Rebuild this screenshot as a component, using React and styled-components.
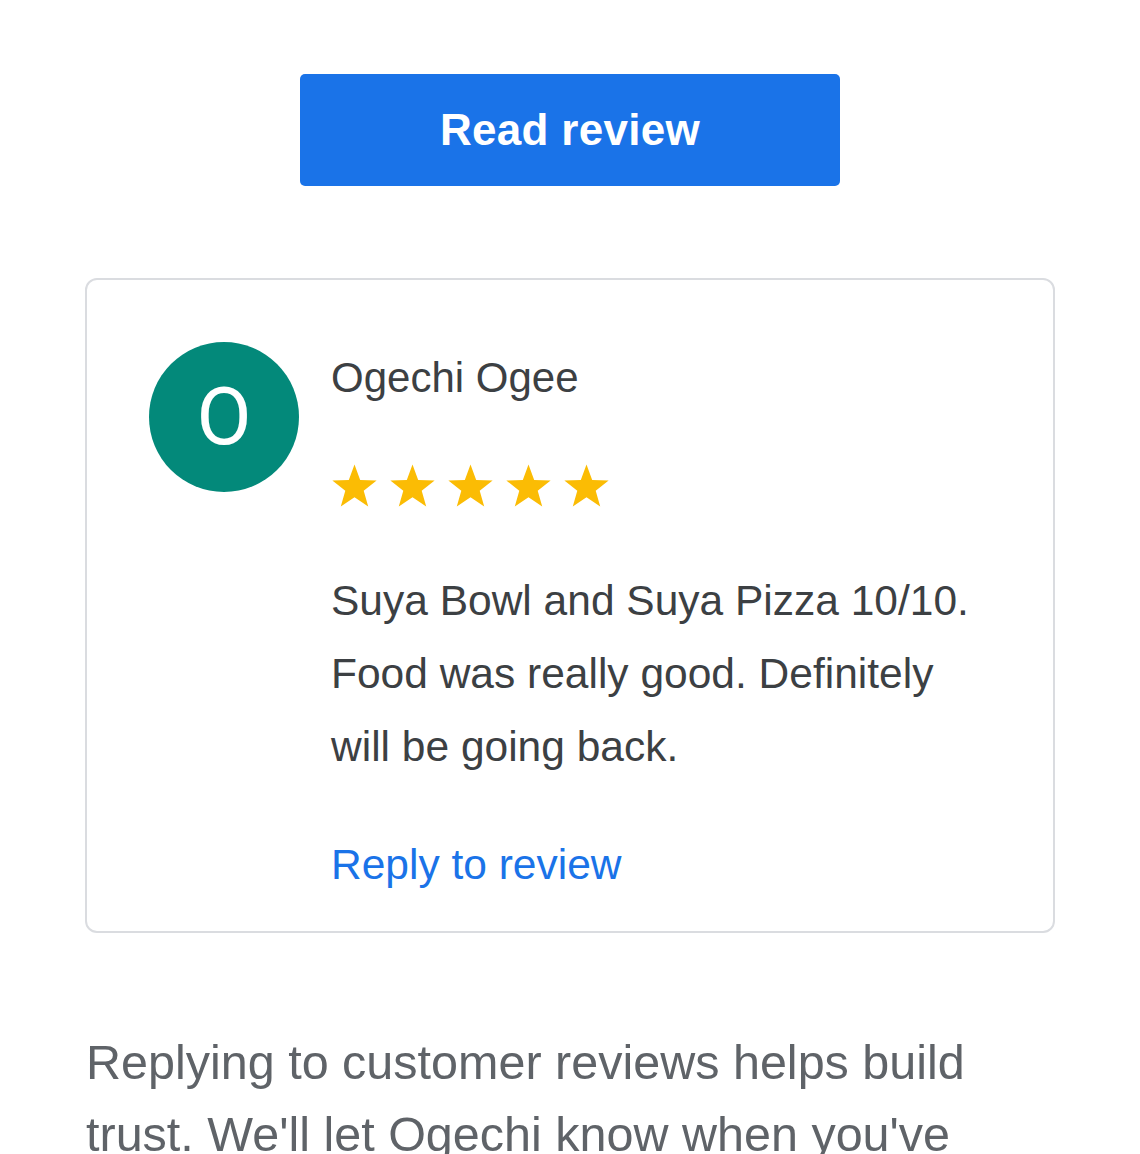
import React from 'react';
import styled, { createGlobalStyle } from 'styled-components';

const GlobalStyle = createGlobalStyle`
  body {
    margin: 0;
    background: #fff;
    font-family: "Liberation Sans", Arial, sans-serif;
  }
`;

const Page = styled.div`
  width: 970px;
  margin: 0 auto;
  padding-top: 74px;
  display: flex;
  flex-direction: column;
  align-items: center;
`;

const PrimaryButton = styled.a`
  width: 540px;
  height: 112px;
  display: flex;
  align-items: center;
  justify-content: center;
  background: #1a73e8;
  color: #fff;
  border-radius: 5px;
  font-size: 44px;
  font-weight: 600;
  letter-spacing: 0.3px;
  text-decoration: none;
`;

const Card = styled.div`
  align-self: stretch;
  margin-top: 92px;
  border: 2px solid #dadce0;
  border-radius: 12px;
  padding: 62px 40px 41px 62px;
  display: flex;
  gap: 32px;
`;

const Avatar = styled.div`
  flex: none;
  width: 150px;
  height: 150px;
  border-radius: 50%;
  background: #03897a;
  color: #fff;
  display: flex;
  align-items: center;
  justify-content: center;
  font-family: Roboto, "Liberation Sans", sans-serif;
  font-size: 80px;
  line-height: 1;
`;

const Body = styled.div`
  display: flex;
  flex-direction: column;
  padding-top: 11px;
`;

const Name = styled.div`
  font-size: 42px;
  line-height: 50px;
  color: #3c4043;
`;

const Stars = styled.div`
  display: flex;
  gap: 11px;
  margin-top: 60px;
`;

const ReviewText = styled.p`
  margin: 55px 0 0;
  font-size: 42.5px;
  line-height: 73px;
  color: #3c4043;
  max-width: 660px;
`;

const ReplyLink = styled.a`
  margin-top: 57px;
  font-size: 42.5px;
  line-height: 50px;
  color: #1a73e8;
  text-decoration: none;
`;

const Footnote = styled.p`
  align-self: stretch;
  margin: 93px 0 0;
  padding-left: 1px;
  font-size: 48.5px;
  line-height: 72px;
  color: #5f6368;
  max-width: 900px;
`;

const Star = () => (
  <svg width="47" height="46" viewBox="0 0 24 23">
    <path
      d="M12 0.5l2.9 7.9 8.4 0.3-6.6 5.2 2.3 8.1L12 17.3l-7 4.7 2.3-8.1L0.7 8.7l8.4-0.3z"
      fill="#fbbc04"
    />
  </svg>
);

export default function App() {
  return (
    <>
      <GlobalStyle />
      <Page>
        <PrimaryButton href="#">Read review</PrimaryButton>
        <Card>
          <Avatar>O</Avatar>
          <Body>
            <Name>Ogechi Ogee</Name>
            <Stars>
              {[0, 1, 2, 3, 4].map(i => <Star key={i} />)}
            </Stars>
            <ReviewText>
              Suya Bowl and Suya Pizza 10/10. Food was really good. Definitely will be going back.
            </ReviewText>
            <ReplyLink href="#">Reply to review</ReplyLink>
          </Body>
        </Card>
        <Footnote>
          Replying to customer reviews helps build trust. We'll let Ogechi know when you've replied.
        </Footnote>
      </Page>
    </>
  );
}
